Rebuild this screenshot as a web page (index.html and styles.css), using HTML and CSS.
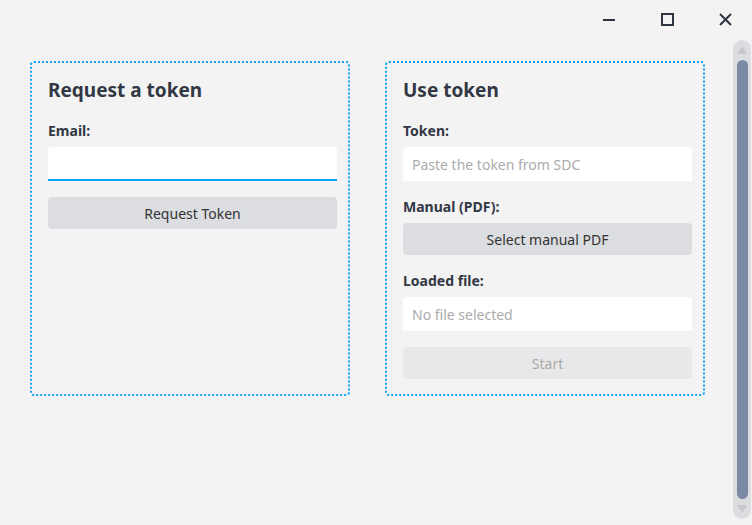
FILE: index.html
```html
<!DOCTYPE html>
<html lang="en">
<head>
    <meta charset="UTF-8">
    <title>Token Tool</title>
    <link rel="stylesheet" href="styles.css">
</head>
<body>
    <div class="titlebar">
        <button class="win-btn" title="Minimize">
            <svg width="14" height="14" viewBox="0 0 14 14"><path d="M1 7h12" stroke="#2e3440" stroke-width="2"/></svg>
        </button>
        <button class="win-btn" title="Maximize">
            <svg width="14" height="14" viewBox="0 0 14 14"><rect x="2" y="1" width="11" height="11" fill="none" stroke="#2e3440" stroke-width="2"/></svg>
        </button>
        <button class="win-btn" title="Close">
            <svg width="14" height="14" viewBox="0 0 14 14"><path d="M2 1l11 11M13 1L2 12" stroke="#2e3440" stroke-width="2"/></svg>
        </button>
    </div>

    <div class="window-body">
        <div class="content">
            <div class="card">
                <h2>Request a token</h2>
                <div class="field">
                    <label for="email">Email:</label>
                    <input type="text" id="email" class="focused">
                </div>
                <button class="btn">Request Token</button>
            </div>

            <div class="card">
                <h2>Use token</h2>
                <div class="field">
                    <label for="token">Token:</label>
                    <input type="text" id="token" placeholder="Paste the token from SDC">
                </div>
                <div class="field">
                    <label>Manual (PDF):</label>
                    <button class="btn">Select manual PDF</button>
                </div>
                <div class="field">
                    <label for="loaded">Loaded file:</label>
                    <input type="text" id="loaded" placeholder="No file selected" readonly>
                </div>
                <button class="btn" disabled>Start</button>
            </div>
        </div>

        <div class="scrollbar">
            <span class="arrow up"></span>
            <div class="thumb"></div>
            <span class="arrow down"></span>
        </div>
    </div>
</body>
</html>
```

FILE: styles.css
```css
body {
    margin: 0;
    height: 525px;
    overflow: hidden;
    background-color: #f3f3f3;
    font-family: "Noto Sans", "Open Sans", sans-serif;
    color: #323744;
}

.titlebar {
    display: flex;
    justify-content: flex-end;
    height: 40px;
    margin-right: -2px;
}

.win-btn {
    width: 58px;
    height: 40px;
    padding: 0;
    border: none;
    background: transparent;
    display: flex;
    align-items: center;
    justify-content: center;
}

.window-body {
    display: flex;
    height: 482px;
}

.content {
    flex: 1;
    display: flex;
    align-items: flex-start;
    gap: 35px;
    padding: 21px 0 0 30px;
}

.card {
    width: 320px;
    height: 335px;
    box-sizing: border-box;
    border: 2px dotted #14a4f5;
    border-radius: 4px;
    padding: 13px 11px 15px 16px;
    display: flex;
    flex-direction: column;
    gap: 16px;
}

.card h2 {
    margin: 0 0 1px;
    font-size: 19px;
    line-height: 28px;
    font-weight: 700;
}

.field {
    display: flex;
    flex-direction: column;
    gap: 6px;
}

.field label {
    font-size: 14px;
    line-height: 20px;
    font-weight: 700;
}

input[type="text"] {
    height: 34px;
    box-sizing: border-box;
    padding: 0 9px;
    border: none;
    border-radius: 4px 4px 0 0;
    background-color: #fff;
    font-family: inherit;
    font-size: 14px;
    color: #323744;
    outline: none;
}

input[type="text"]::placeholder {
    color: #ababab;
}

input.focused {
    border-bottom: 2px solid #0ea5f2;
}

.btn {
    height: 32px;
    border: none;
    border-radius: 4px;
    background-color: #dcdde1;
    font-family: inherit;
    font-size: 14px;
    color: #333;
}

.btn:disabled {
    background-color: #e8e8ea;
    color: #a8a8a8;
}

.scrollbar {
    width: 18px;
    margin: 0 1px 3px 0;
    border-radius: 9px;
    background-color: #dcdde1;
    display: flex;
    flex-direction: column;
    align-items: center;
}

.arrow {
    width: 0;
    height: 0;
    border-left: 5px solid transparent;
    border-right: 5px solid transparent;
}

.arrow.up {
    margin: 6px 0 6px;
    border-bottom: 8px solid #c6c8cd;
}

.arrow.down {
    margin: 6px 0 6px;
    border-top: 8px solid #c6c8cd;
}

.thumb {
    flex: 1;
    width: 11px;
    border-radius: 6px;
    background-color: #7b8aa2;
}
```
